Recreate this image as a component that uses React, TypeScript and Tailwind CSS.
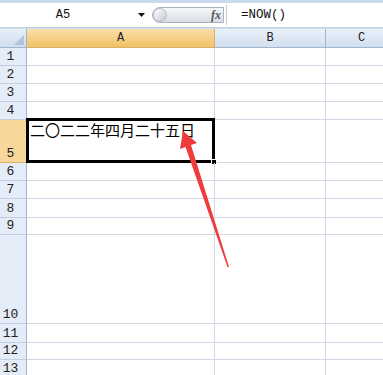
import React from 'react'

const mono = { fontFamily: '"Liberation Mono", "DejaVu Sans Mono", monospace' }

// row heights include the 1px bottom grid line
const rows: { n: number; h: string }[] = [
  { n: 1, h: 'h-[18px]' },
  { n: 2, h: 'h-[18px]' },
  { n: 3, h: 'h-[18px]' },
  { n: 4, h: 'h-[18px]' },
  { n: 5, h: 'h-[43px]' },
  { n: 6, h: 'h-[18px]' },
  { n: 7, h: 'h-[18px]' },
  { n: 8, h: 'h-[19px]' },
  { n: 9, h: 'h-[17px]' },
  { n: 10, h: 'h-[89px]' },
  { n: 11, h: 'h-[19px]' },
  { n: 12, h: 'h-[17px]' },
  { n: 13, h: 'h-[18px]' },
]

const FormulaBar: React.FC = () => (
  <>
    <div className="h-[3px] bg-[#c9d9ee]" />
    <div className="h-[24px] flex items-center bg-white" style={mono}>
      <div className="w-[126px] text-center text-[12px] text-[#111]">A5</div>
      <svg width="8" height="5" viewBox="0 0 8 5" className="ml-[12px]">
        <path d="M0 0 L7 0 L3.5 4 Z" fill="#111" />
      </svg>
      {/* button pill with fx */}
      <div className="ml-[6px] h-[16px] w-[72px] flex items-center rounded-l-full border border-[#aab2be] bg-gradient-to-b from-[#f6f7f9] to-[#d9dee5]">
        <div className="w-[14px] h-[14px] rounded-full bg-gradient-to-br from-[#ffffff] to-[#c3c9d1] border border-[#b8bec8]" />
        <span
          className="ml-auto mr-[2px] text-[12px] italic font-bold text-[#555]"
          style={{ fontFamily: '"Liberation Serif", serif' }}
        >
          fx
        </span>
      </div>
      <div className="ml-[2px] h-[20px] w-px bg-[#c4ccd6]" />
      <div className="ml-[14px] text-[12.5px] text-[#111]">=NOW()</div>
    </div>
    <div className="h-[2px] bg-gradient-to-b from-[#b9c9dc] to-[#dbe4ef]" />
  </>
)

export default function App() {
  return (
    <div className="relative w-[383px] h-[375px] overflow-hidden bg-white">
      <FormulaBar />

      <div className="grid grid-cols-[27px_188px_111px_1fr] text-[#222]" style={mono}>
        {/* header row */}
        <div className="relative h-[19px] bg-gradient-to-b from-[#e6eefa] to-[#d2deee] border-r border-b border-[#9eb6ce]">
          <svg width="10" height="10" viewBox="0 0 10 10" className="absolute right-[2px] bottom-[2px]">
            <path d="M10 0 L10 10 L0 10 Z" fill="#b4c3d8" />
          </svg>
        </div>
        <div className="h-[19px] flex items-center justify-center text-[12px] bg-gradient-to-b from-[#fadfa9] to-[#f2c264] border-r border-b border-[#d9b26a]">
          A
        </div>
        <div className="h-[19px] flex items-center justify-center text-[12px] bg-gradient-to-b from-[#e9f0fa] to-[#d3dfef] border-r border-b border-[#9eb6ce]">
          B
        </div>
        <div className="h-[19px] flex items-center justify-center text-[12px] pl-[14px] bg-gradient-to-b from-[#e9f0fa] to-[#d3dfef] border-b border-[#9eb6ce]">
          C
        </div>

        {rows.map((r) => {
          const sel = r.n === 5
          return (
            <React.Fragment key={r.n}>
              <div
                className={`${r.h} flex items-end justify-center pr-[5px] text-[13px] leading-[16px] border-r border-b ${
                  sel ? 'bg-[#f8d79b] border-r-[#d9b26a] border-b-[#d9b26a]' : 'bg-[#e4ecf7] border-r-[#9eb6ce] border-b-[#c3cfe0]'
                }`}
              >
                {r.n}
              </div>
              <div className={`${r.h} relative border-r border-b border-[#d0d7e5]`}>
                {sel && (
                  <>
                    <div
                      className="pl-[3px] pt-[1px] text-[15px] leading-[17px] text-black whitespace-nowrap"
                      style={{ fontFamily: '"Noto Sans CJK SC", "Noto Sans", sans-serif' }}
                    >
                      二〇二二年四月二十五日
                    </div>
                    <div className="absolute left-[-1px] top-[-2px] w-[189px] h-[45px] border-[3px] border-black">
                      <div className="absolute right-[-5px] bottom-[-5px] w-[6px] h-[6px] bg-black border border-white" />
                    </div>
                  </>
                )}
              </div>
              <div className={`${r.h} border-r border-b border-[#d0d7e5]`} />
              <div className={`${r.h} border-b border-[#d0d7e5]`} />
            </React.Fragment>
          )
        })}
      </div>

      {/* red annotation arrow */}
      <svg className="absolute left-0 top-0" width="383" height="375" viewBox="0 0 383 375">
        <path
          d="M183 131 L197 143 L191 145 L229 267 L227.5 267 L185.5 147 L180 149 Z"
          fill="#ee3b3b"
        />
      </svg>
    </div>
  )
}
